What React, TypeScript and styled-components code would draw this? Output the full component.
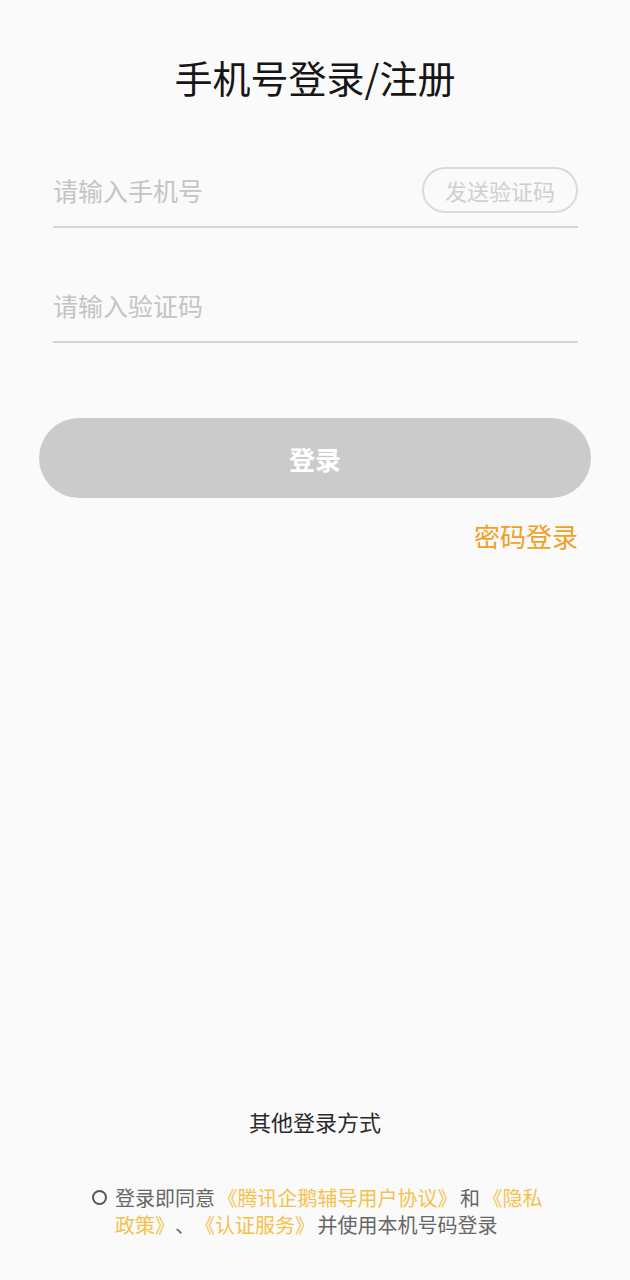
import { FC } from 'react';
import styled, { createGlobalStyle } from 'styled-components';

const GlobalStyle = createGlobalStyle`
  html, body {
    margin: 0;
    padding: 0;
    background: #fafafa;
  }

  * {
    box-sizing: border-box;
  }
`;

const App: FC = () => {
  return (
    <>
      <GlobalStyle />
      <Page>
        <Title>手机号登录/注册</Title>

        <Form>
          <Field>
            <Input placeholder="请输入手机号" />
            <CodeButton>发送验证码</CodeButton>
          </Field>
          <Field $gap={40}>
            <Input placeholder="请输入验证码" />
          </Field>
        </Form>

        <LoginButton>登录</LoginButton>

        <SwitchRow>
          <SwitchLink>密码登录</SwitchLink>
        </SwitchRow>

        <Spacer />

        <OtherWays>其他登录方式</OtherWays>

        <Agreement>
          <Radio />
          <AgreementText>
            登录即同意 <Link>《腾讯企鹅辅导用户协议》</Link> 和 <Link>《隐私政策》</Link>、<Link>《认证服务》</Link> 并使用本机号码登录
          </AgreementText>
        </Agreement>
      </Page>
    </>
  );
};

export default App;

const Page = styled.div`
  display: flex;
  flex-direction: column;
  min-height: 100vh;
  padding: 54px 0 42px;
  font-family: "Noto Sans CJK SC", "Noto Sans", sans-serif;
`;

const Title = styled.h1`
  margin: 0;
  font-size: 38px;
  line-height: 46px;
  font-weight: 400;
  color: #161616;
  text-align: center;
`;

const Form = styled.div`
  display: flex;
  flex-direction: column;
  padding: 0 52px 0 53px;
  margin-top: 53px;
`;

const Field = styled.div<{ $gap?: number }>`
  display: flex;
  align-items: center;
  gap: 16px;
  height: 75px;
  margin-top: ${({ $gap }) => $gap ?? 0}px;
  border-bottom: 2px solid #d4d4d4;
`;

const Input = styled.input`
  flex: 1;
  min-width: 0;
  border: none;
  outline: none;
  background: transparent;
  padding: 0;
  font-family: inherit;
  font-size: 25px;
  color: #333;

  &::placeholder {
    color: #c4c4c4;
  }
`;

const CodeButton = styled.button`
  height: 46px;
  padding: 0 21px;
  border: 2px solid #dadada;
  border-radius: 23px;
  background: transparent;
  font-family: inherit;
  font-size: 22px;
  color: #cfcfcf;
  line-height: 1;
`;

const LoginButton = styled.button`
  margin: 75px 39px 0;
  height: 80px;
  border: none;
  border-radius: 40px;
  background: #cbcbcb;
  color: #ffffff;
  font-family: inherit;
  font-size: 26px;
  font-weight: 700;
`;

const SwitchRow = styled.div`
  display: flex;
  justify-content: flex-end;
  padding: 0 52px;
  margin-top: 20px;
`;

const SwitchLink = styled.span`
  font-size: 26px;
  line-height: 36px;
  color: #f0a024;
`;

const Spacer = styled.div`
  flex: 1;
`;

const OtherWays = styled.div`
  text-align: center;
  font-size: 22px;
  line-height: 30px;
  color: #2a2a2a;
  margin-bottom: 48px;
`;

const Agreement = styled.div`
  display: flex;
  align-items: flex-start;
  gap: 8px;
  padding-left: 92px;
`;

const Radio = styled.span`
  flex-shrink: 0;
  width: 15px;
  height: 15px;
  margin-top: 6px;
  border: 2px solid #555;
  border-radius: 50%;
`;

const AgreementText = styled.p`
  margin: 0;
  width: 432px;
  font-size: 20px;
  line-height: 27px;
  color: #666;
  word-spacing: -2px;
  text-spacing-trim: space-all;
`;

const Link = styled.span`
  color: #f4c24c;
`;
